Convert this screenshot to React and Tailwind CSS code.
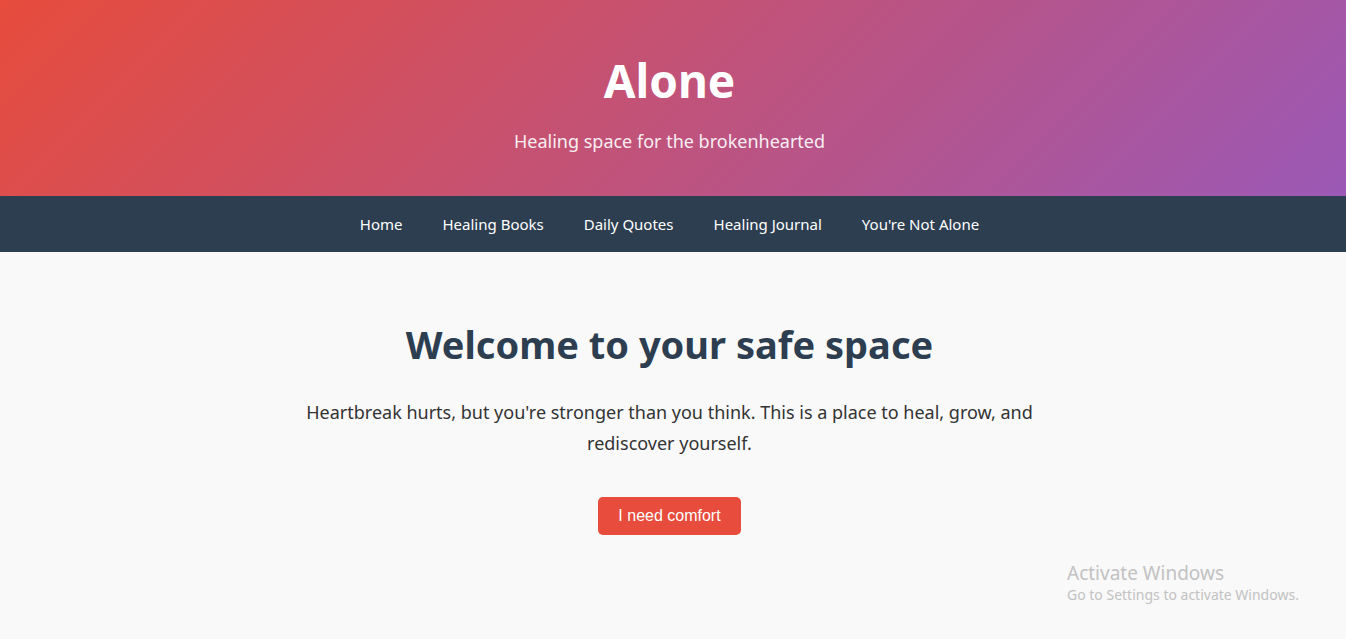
import React from 'react';

const links = ['Home', 'Healing Books', 'Daily Quotes', 'Healing Journal', "You're Not Alone"];

const App = () => {
  return (
    <div className="min-h-[639px] bg-[#f9f9f9] text-[#333] relative pr-[7px]" style={{ fontFamily: "'Segoe UI', 'Noto Sans', sans-serif" }}>
      {/* Header */}
      <header className="h-[196px] bg-[linear-gradient(135deg,#e74c3c,#9b59b6)] text-white flex flex-col items-center pt-[48px] -mr-[7px] pr-[7px]">
        <h1 className="text-[46px] font-bold leading-[64px]">Alone</h1>
        <p className="text-[18px] mt-[16px] opacity-90">Healing space for the brokenhearted</p>
      </header>

      {/* Nav */}
      <nav className="h-[56px] bg-[#2c3e50] flex items-center justify-center gap-[40px] -mr-[7px] pr-[7px]">
        {links.map(link => (
          <a key={link} href="#" className="text-white text-[15px]">{link}</a>
        ))}
      </nav>

      {/* Main */}
      <main className="flex flex-col items-center pt-[64px] px-4">
        <h2 className="text-[38px] font-bold text-[#2c3e50] leading-[56px]">Welcome to your safe space</h2>
        <p className="max-w-[750px] text-center text-[18px] leading-[31px] mt-[25px]">
          Heartbreak hurts, but you're stronger than you think. This is a place to heal, grow, and rediscover yourself.
        </p>
        <button className="mt-[38px] bg-[#e74c3c] text-white text-[16px] px-[20px] h-[38px] rounded-[5px]" style={{ fontFamily: "'Liberation Sans', Arial, sans-serif" }}>
          I need comfort
        </button>
      </main>

      {/* Windows watermark */}
      <div className="absolute left-[1067px] top-[561px] text-[#c2c2c2] pointer-events-none">
        <div className="text-[19px] leading-[24px]">Activate Windows</div>
        <div className="text-[14px] leading-[20px]">Go to Settings to activate Windows.</div>
      </div>
    </div>
  );
};

export default App;
